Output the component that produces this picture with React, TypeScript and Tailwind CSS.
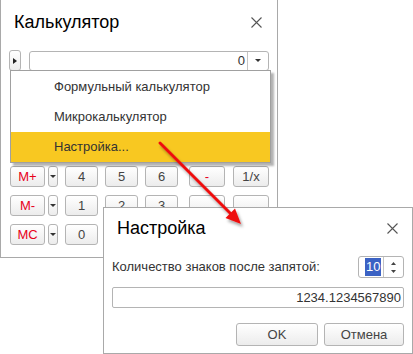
import React from "react";

const font = "font-['Liberation_Sans',Arial,sans-serif]";

function CloseIcon() {
  return (
    <svg width="11" height="11" viewBox="0 0 11 11" className="block">
      <path d="M0.5 0.5 L10.5 10.5 M10.5 0.5 L0.5 10.5" stroke="#555" strokeWidth="1.1" />
    </svg>
  );
}

function Tri({ dir }: { dir: "down" | "right" | "up" }) {
  if (dir === "right")
    return (
      <svg width="4" height="6" viewBox="0 0 4 6" className="block">
        <path d="M0 0 L4 3 L0 6 Z" fill="#222" />
      </svg>
    );
  if (dir === "up")
    return (
      <svg width="5" height="3" viewBox="0 0 5 3" className="block">
        <path d="M0 3 L2.5 0 L5 3 Z" fill="#444" />
      </svg>
    );
  return (
    <svg width="6" height="3" viewBox="0 0 6 3" className="block">
      <path d="M0 0 L6 0 L3 3 Z" fill="#333" />
    </svg>
  );
}

const btn =
  "flex items-center justify-center h-[21px] rounded-[3px] border border-[#b4b4b4] bg-gradient-to-b from-white to-[#ececec] text-[13px] text-[#444] shrink-0";

type Row = { mem: string; keys: string[] };

// the first three rows sit under the menu, so they keep only their place
const rows: Row[] = [
  { mem: "", keys: ["", "", "", "", ""] },
  { mem: "", keys: ["", "", "", "", ""] },
  { mem: "", keys: ["", "", "", "", ""] },
  { mem: "M+", keys: ["4", "5", "6", "-", "1/x"] },
  { mem: "M-", keys: ["1", "2", "3", "", ""] },
  { mem: "MC", keys: ["0", "", "", "", ""] },
];

function KeyRow({ row }: { row: Row }) {
  const widths = ["w-[33px] ml-[7px]", "w-[33px] ml-[7px]", "w-[33px] ml-[7px]", "w-[36px] ml-[11px]", "w-[36px] ml-[8px]"];
  return (
    <div className="flex items-center pl-[9px]">
      <div className={`${btn} w-[35px] text-[#e8001a]`}>{row.mem}</div>
      <div className={`${btn} w-[10px] ml-[3px]`}>
        <Tri dir="down" />
      </div>
      {row.keys.map((k, i) => (
        <div key={i} className={`${btn} ${widths[i]} ${i === 3 ? "text-[#e8001a]" : ""}`}>
          {k}
        </div>
      ))}
    </div>
  );
}

function Calculator() {
  return (
    <div className="absolute left-0 top-0 w-[278px] h-[258px] border-x border-b border-[#a9a9a9] bg-white">
      <div className="flex items-center justify-between h-[44px] pl-[13px] pr-[15px]">
        <span className="text-[18px] text-black">Калькулятор</span>
        <CloseIcon />
      </div>
      <div className="flex items-center mt-[6px] pl-[8px]">
        <div className={`${btn} w-[12px] h-[20px]`}>
          <Tri dir="right" />
        </div>
        <div className="flex ml-[8px] w-[240px] h-[20px] rounded-[3px] border border-[#b4b4b4] bg-white">
          <div className="flex-1 flex items-center justify-end pr-[2px] text-[13px] text-[#333]">0</div>
          <div className="w-[21px] border-l border-[#c4c4c4] flex items-center justify-center">
            <Tri dir="down" />
          </div>
        </div>
      </div>
      <div className="flex flex-col gap-[8px] mt-[8px]">
        {rows.map((r, i) => (
          <KeyRow key={i} row={r} />
        ))}
      </div>

      {/* dropdown menu */}
      <div className="absolute left-[9px] top-[70px] w-[261px] h-[93px] border border-[#a0a0a0] bg-white pt-[1px] shadow-[3px_3px_2px_rgba(0,0,0,0.3)] text-[13px] text-[#333]">
        <div className="h-[30px] flex items-center pl-[43px]">Формульный калькулятор</div>
        <div className="h-[30px] flex items-center pl-[43px]">Микрокалькулятор</div>
        <div className="h-[30px] flex items-center pl-[43px] bg-[#f8c821]">Настройка...</div>
      </div>
    </div>
  );
}

function Settings() {
  return (
    <div className="absolute left-[103px] top-[207px] w-[310px] h-[147px] border border-[#a9a9a9] bg-white">
      <div className="flex items-center justify-between h-[40px] pl-[13px] pr-[14px]">
        <span className="text-[18px] text-black">Настройка</span>
        <CloseIcon />
      </div>
      <div className="flex items-center justify-between mt-[8px] px-[8px]">
        <span className="text-[13px] text-[#333]">Количество знаков после запятой:</span>
        <div className="flex w-[46px] h-[22px] rounded-[3px] border border-[#b4b4b4]">
          <div className="flex-1 flex items-center pl-[6px]">
            <span className="bg-[#3b62c4] text-white text-[13px] leading-[18px] px-[1px]">10</span>
          </div>
          <div className="w-[20px] border-l border-[#c4c4c4] flex flex-col items-center justify-center gap-[5px]">
            <Tri dir="up" />
            <svg width="5" height="3" viewBox="0 0 5 3" className="block">
              <path d="M0 0 L5 0 L2.5 3 Z" fill="#444" />
            </svg>
          </div>
        </div>
      </div>
      <div className="mx-[8px] mt-[9px] h-[21px] border border-[#b4b4b4] rounded-[2px] flex items-center justify-end pr-[2px] text-[13px] text-[#333]">
        1234.1234567890
      </div>
      <div className="flex justify-end gap-[6px] mt-[15px] pr-[8px]">
        <div className={`${btn} w-[82px] h-[23px]`}>OK</div>
        <div className={`${btn} w-[80px] h-[23px]`}>Отмена</div>
      </div>
    </div>
  );
}

function Arrow() {
  return (
    <svg className="absolute left-0 top-0 pointer-events-none" width="413" height="354" viewBox="0 0 413 354">
      <defs>
        <filter id="sh" x="-20%" y="-20%" width="140%" height="140%">
          <feDropShadow dx="2" dy="3" stdDeviation="1.5" floodColor="#000" floodOpacity="0.35" />
        </filter>
      </defs>
      <g filter="url(#sh)">
        <line x1="160" y1="143" x2="232" y2="215" stroke="#ee1111" strokeWidth="3" strokeLinecap="round" />
        <path d="M241 224 L225.5 218 L235 208.5 Z" fill="#ee1111" />
      </g>
    </svg>
  );
}

export default function App() {
  return (
    <div className={`relative w-[413px] h-[354px] bg-white overflow-hidden ${font}`}>
      <Calculator />
      <Settings />
      <Arrow />
    </div>
  );
}
